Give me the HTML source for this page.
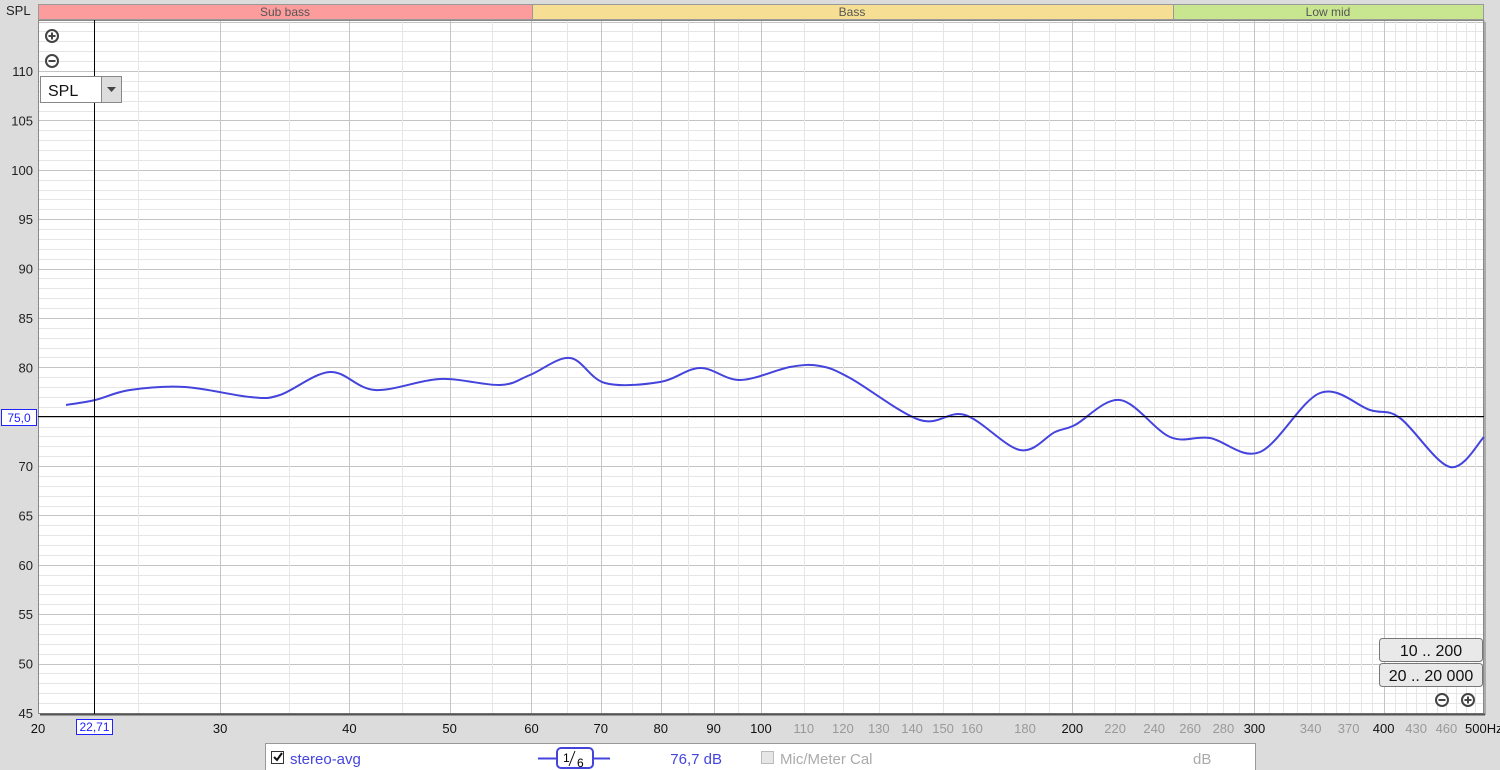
<!DOCTYPE html>
<html><head><meta charset="utf-8"><style>
body{margin:0;width:1500px;height:770px;background:#dcdcdc;font-family:"Liberation Sans",sans-serif;overflow:hidden;position:relative}
</style></head><body>
<svg id="s" width="1500" height="770" style="position:absolute;left:0;top:0" font-family="Liberation Sans, sans-serif"></svg>
<script>
var s=document.getElementById('s'),h='';
var X0=38,X1=1484,Y0=20,Y1=713;
function fx(f){return X0+1034.3*Math.log10(f/20);}
function fy(d){return 71+(110-d)*9.877;}
h+='<rect x="'+X0+'" y="'+Y0+'" width="'+(X1-X0)+'" height="'+(Y1-Y0)+'" fill="#fff"/>';
for(var d=45;d<=115;d++){var y=fy(d);if(y<Y0||y>Y1+1)continue;var maj=d%5==0;
if(d>45)h+='<line x1="'+X0+'" x2="'+X1+'" y1="'+(Math.round(y)+.5)+'" y2="'+(Math.round(y)+.5)+'" stroke="'+(maj?'#c4c4c4':'#e6e6e6')+'"/>';
if(maj&&d<=110)h+='<text x="33" y="'+(y+5)+'" font-size="13" text-anchor="end" fill="#222">'+d+'</text>';}
var fs=[];for(var f=20;f<100;f+=5)fs.push(f);for(f=100;f<=500;f+=10)fs.push(f);
fs.forEach(function(f){var x=Math.round(fx(f))+.5;var maj=(f<=100&&f%10==0)||f%100==0;
h+='<line y1="'+Y0+'" y2="'+Y1+'" x1="'+x+'" x2="'+x+'" stroke="'+(maj?'#c4c4c4':'#e6e6e6')+'"/>';});
var labs=[[20,1],[30,1],[40,1],[50,1],[60,1],[70,1],[80,1],[90,1],[100,1],[110],[120],[130],[140],[150],[160],[180],[200,1],[220],[240],[260],[280],[300,1],[340],[370],[400,1],[430],[460]];
labs.forEach(function(l){h+='<text x="'+fx(l[0])+'" y="733" font-size="13" text-anchor="middle" fill="'+(l[1]?'#111':'#999')+'">'+l[0]+'</text>';});
h+='<text x="1465" y="733" font-size="13" fill="#111">500Hz</text>';
h+='<rect x="'+X0+'.5" y="'+Y0+'.5" width="'+(X1-X0-1)+'" height="'+(Y1-Y0)+'" fill="none" stroke="#888"/>';
h+='<line x1="'+(X1+1)+'" x2="'+(X1+1)+'" y1="22" y2="715" stroke="#aaa" stroke-width="2"/><line x1="40" x2="1485" y1="714.5" y2="714.5" stroke="#555" stroke-width="2"/>';
h+='<rect x="38.5" y="4.5" width="494" height="15" fill="#fd9c9c" stroke="#999"/><text x="285" y="16" font-size="12" text-anchor="middle" fill="#555">Sub bass</text>';
h+='<rect x="532.5" y="4.5" width="641" height="15" fill="#f6df94" stroke="#999"/><text x="852" y="16" font-size="12" text-anchor="middle" fill="#555">Bass</text>';
h+='<rect x="1173.5" y="4.5" width="310" height="15" fill="#c8e690" stroke="#999"/><text x="1328" y="16" font-size="12" text-anchor="middle" fill="#555">Low mid</text>';
h+='<text x="6" y="15" font-size="13" fill="#222">SPL</text>';
var p=[[66,405],[95,400],[130,390],[185,387],[250,397],[280,395],[330,372],[375,390],[440,379],[500,385],[530,375],[570,358],[605,383],[660,382],[700,368],[740,380],[790,367],[820,366],[850,378],[920,420],[965,415],[1020,450],[1055,432],[1075,425],[1120,400],[1170,437],[1210,438],[1260,452],[1320,393],[1370,410],[1400,418],[1450,467],[1484,437]];
var d='M'+p[0];for(var i=0;i<p.length-1;i++){var a=p[i-1]||p[i],b=p[i],c=p[i+1],e=p[i+2]||c;
d+=' C'+(b[0]+(c[0]-a[0])/6)+','+(b[1]+(c[1]-a[1])/6)+' '+(c[0]-(e[0]-b[0])/6)+','+(c[1]-(e[1]-b[1])/6)+' '+c;}
h+='<path d="'+d+'" fill="none" stroke="#4444dd" stroke-width="2"/>';
h+='<line x1="94.5" x2="94.5" y1="20" y2="714" stroke="#000"/><line x1="38" x2="1484" y1="416.5" y2="416.5" stroke="#000"/>';
h+='<rect x="1.5" y="409.5" width="35" height="16" fill="#fff" stroke="#22f"/><text x="19" y="422" font-size="12" text-anchor="middle" fill="#22f">75,0</text>';
h+='<rect x="76.5" y="719.5" width="36" height="15" fill="#fff" stroke="#22f"/><text x="94.5" y="731" font-size="12" text-anchor="middle" fill="#22f">22,71</text>';
function zi(x,y,plus){var r='<circle cx="'+x+'" cy="'+y+'" r="6" fill="#fff" stroke="#444" stroke-width="2"/><line x1="'+(x-3.5)+'" x2="'+(x+3.5)+'" y1="'+y+'" y2="'+y+'" stroke="#444" stroke-width="2"/>';if(plus)r+='<line y1="'+(y-3.5)+'" y2="'+(y+3.5)+'" x1="'+x+'" x2="'+x+'" stroke="#444" stroke-width="2"/>';return r;}
h+=zi(52,36,1)+zi(52,61,0)+zi(1442,700,0)+zi(1468,700,1);
h+='<rect x="40.5" y="76.5" width="81" height="26" fill="#fff" stroke="#888"/><rect x="101.5" y="76.5" width="20" height="26" fill="#ddd" stroke="#888"/><path d="M107 87h9l-4.5 5z" fill="#444"/><text x="48" y="96" font-size="16" fill="#111">SPL</text>';
function bt(y,t){return '<rect x="1379.5" y="'+y+'.5" width="103" height="23" rx="3" fill="#e9e9e9" stroke="#777"/><text x="1431" y="'+(y+18)+'" font-size="16" text-anchor="middle" fill="#111">'+t+'</text>';}
h+=bt(638,'10 .. 200')+bt(663,'20 .. 20 000');
h+='<rect x="265.5" y="743.5" width="990" height="30" fill="#fff" stroke="#999"/>';
h+='<rect x="271.5" y="751.5" width="12" height="12" fill="#fff" stroke="#333"/><path d="M274 757l3 3 5-7" fill="none" stroke="#111" stroke-width="2"/>';
h+='<text x="290" y="764" font-size="15" fill="#4444dd">stereo-avg</text>';
h+='<line x1="538" x2="610" y1="758.5" y2="758.5" stroke="#4444dd" stroke-width="2"/><rect x="557" y="748" width="36" height="20" rx="4" fill="#fff" stroke="#4444dd" stroke-width="2"/><text x="563" y="762" font-size="12">1</text><line x1="569" x2="575" y1="766" y2="751" stroke="#111"/><text x="577" y="767" font-size="12">6</text>';
h+='<text x="722" y="764" font-size="15" text-anchor="end" fill="#4444dd">76,7 dB</text>';
h+='<rect x="761.5" y="751.5" width="12" height="12" fill="#e6e6e6" stroke="#bbb"/><text x="780" y="764" font-size="15" fill="#aaa">Mic/Meter Cal</text><text x="1193" y="764" font-size="15" fill="#aaa">dB</text>';
s.innerHTML=h;
</script>
</body></html>
